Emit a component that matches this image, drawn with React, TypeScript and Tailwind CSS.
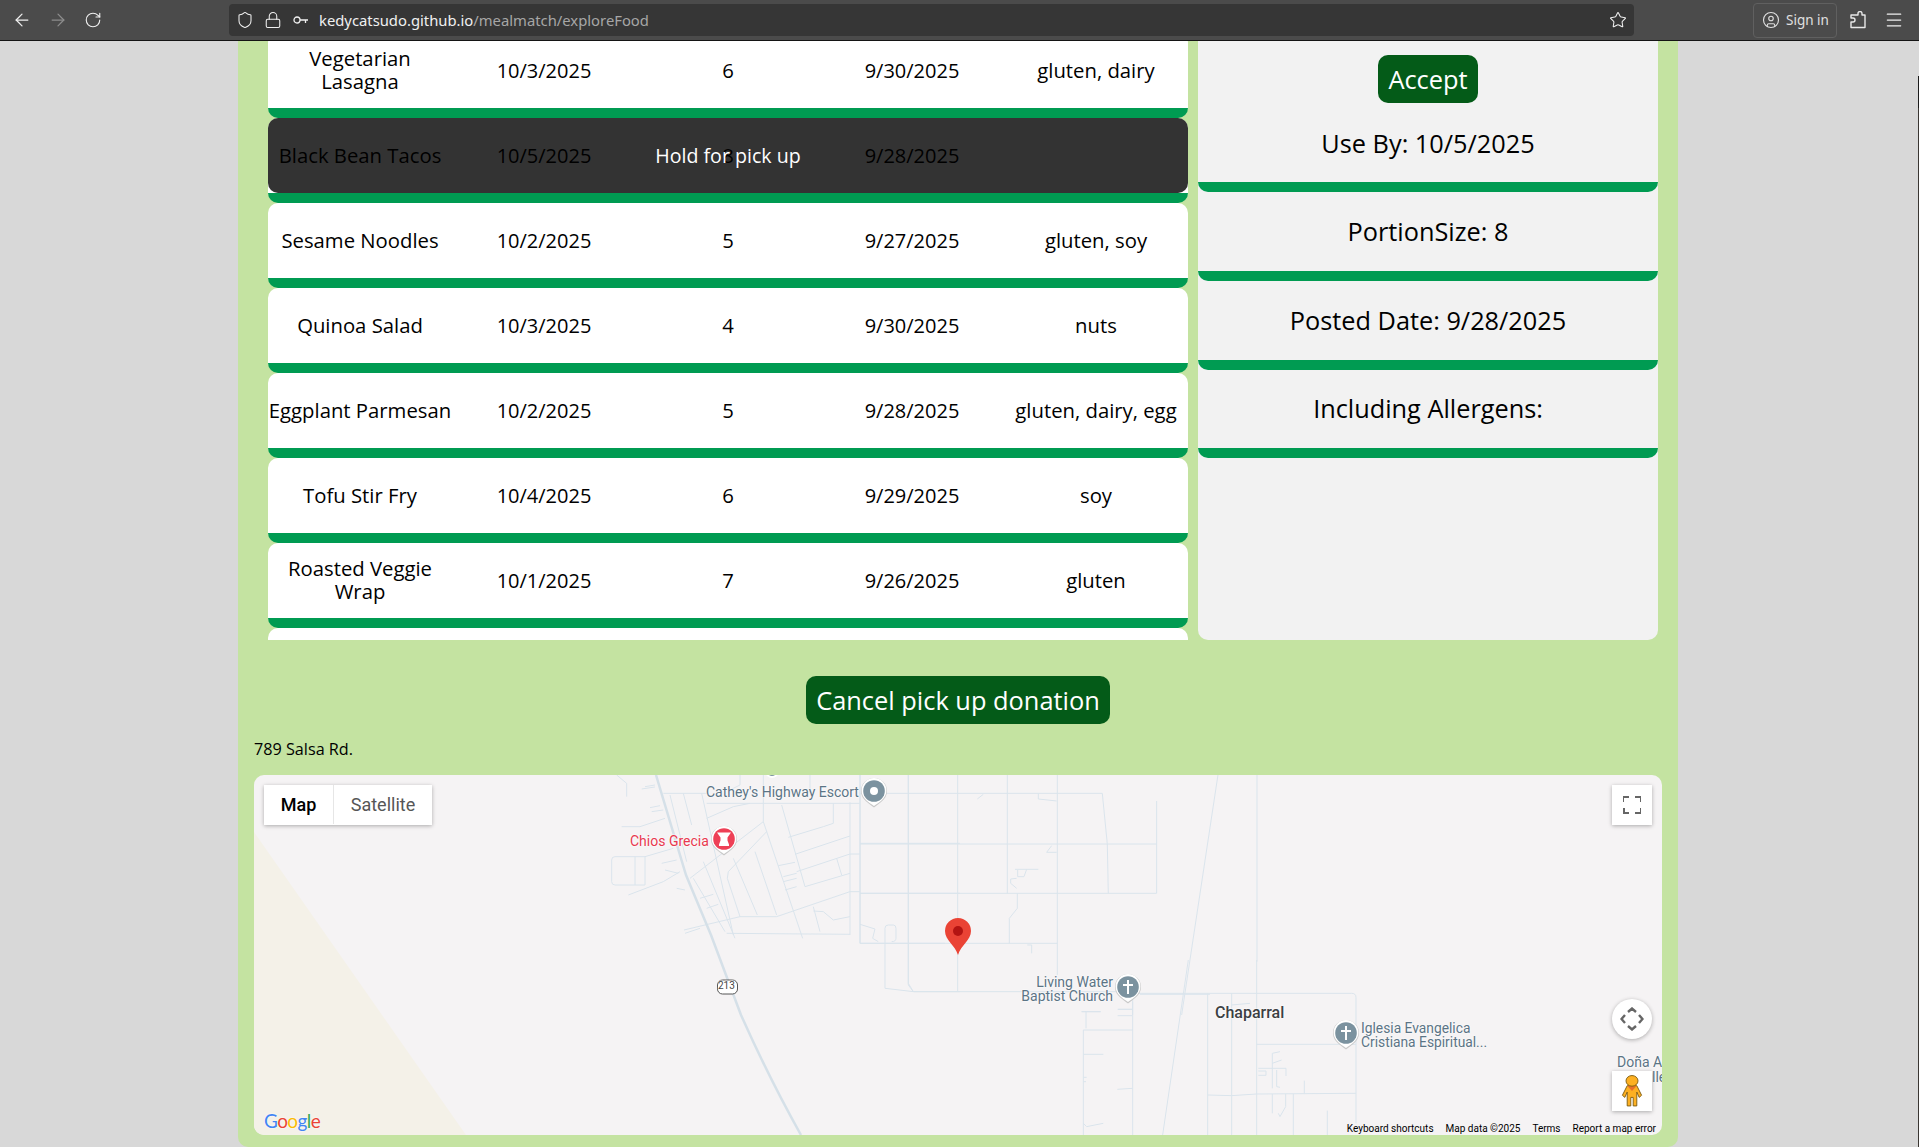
import React from 'react';
import { ArrowLeft, ArrowRight, RotateCw, Shield, Lock, Star, Menu, CircleUser } from 'lucide-react';

interface Food {
  name: string;
  useBy: string;
  portions: string;
  posted: string;
  allergens: string;
  held?: boolean;
}

const foods: Food[] = [
  { name: 'Vegetarian Lasagna', useBy: '10/3/2025', portions: '6', posted: '9/30/2025', allergens: 'gluten, dairy' },
  { name: 'Black Bean Tacos', useBy: '10/5/2025', portions: '8', posted: '9/28/2025', allergens: '', held: true },
  { name: 'Sesame Noodles', useBy: '10/2/2025', portions: '5', posted: '9/27/2025', allergens: 'gluten, soy' },
  { name: 'Quinoa Salad', useBy: '10/3/2025', portions: '4', posted: '9/30/2025', allergens: 'nuts' },
  { name: 'Eggplant Parmesan', useBy: '10/2/2025', portions: '5', posted: '9/28/2025', allergens: 'gluten, dairy, egg' },
  { name: 'Tofu Stir Fry', useBy: '10/4/2025', portions: '6', posted: '9/29/2025', allergens: 'soy' },
  { name: 'Roasted Veggie Wrap', useBy: '10/1/2025', portions: '7', posted: '9/26/2025', allergens: 'gluten' },
];

// roads traced from the map, in 3x crop coordinates
const westRoads = [
  'M190 55H320', 'M320 85H780', 'M750 82V480', 'M780 0V505', 'M780 205H1080', 'M780 355H1080', 'M780 505H1035',
  'M925 0V630L940 650', 'M210 60L260 260', 'M250 55L275 150', 'M305 55L400 480', 'M490 0V140L608 490',
  'M490 140L270 310', 'M500 170L385 290L382 310L420 425', 'M465 230L530 420', 'M400 250L472 420', 'M310 260L405 490',
  'M280 310L375 470', 'M252 465L420 425H530L750 350H780', 'M255 475L300 460', 'M380 475L750 478',
  'M545 90L615 335L750 295', 'M565 187L670 155L700 145V85', 'M585 238L750 183', 'M535 272L585 262',
  'M590 290L750 237H780', 'M710 250L725 300', 'M550 305L590 295', 'M550 320L590 310', 'M555 345L590 335',
  'M640 395L660 470', 'M640 408L670 410L700 435L750 425', 'M45 245H135V330H45Q35 330 35 320V255Q35 245 45 245',
  'M105 245V330', 'M135 245L220 220', 'M85 360L190 320L240 290', 'M65 155H120L195 130', 'M135 35L165 30', 'M125 42L165 36',
  'M150 98L180 92', 'M155 110L190 105', 'M185 265L230 255', 'M195 285L235 295', 'M50 0L80 25V65', 'M230 340L255 345',
  'M320 130L400 95L450 85', 'M420 0V30L390 45', 'M630 0V55', 'M300 370L340 358', 'M320 400L355 388',
  'M855 640V460Q855 450 865 450H880Q888 450 888 460V490Q888 500 875 500', 'M855 640L940 650H1080',
  'M780 448L825 462L818 490L835 500',
];

const midRoads = [
  'M30 55H757L772 207L775 355', 'M30 207H920', 'M920 78V355', 'M30 355H920', 'M30 505H622', 'M30 0V505',
  'M175 0V625L190 650', 'M323 0V650', 'M472 0V355', 'M622 0V600', 'M502 355V400L478 430V505', 'M190 650H800',
  'M565 55V72L620 78', 'M382 72L400 58', 'M495 283H565', 'M530 283L522 305H503V285', 'M500 340L482 325V312L500 310',
  'M590 232H620', 'M590 232L605 212', 'M532 510H545V535', 'M870 658H1080', 'M695 710H752', 'M805 703H848', 'M848 680V720',
  'M1104 0L995 720', 'M1221 0V560',
];

const eastRoads = [
  'M278 100H935Q948 100 948 112V490', 'M278 100V525', 'M130 210H278', 'M130 210V525', 'M125 155H182', 'M138 155V205',
  'M233 148H276', 'M233 167H276', 'M130 283H190', 'M232 388L278 385', 'M130 490L140 500L165 495L190 490',
  'M445 0L368 525', 'M650 0V525', 'M503 100V525', 'M575 100V525', 'M503 405L575 407L650 402L948 400', 'M650 253H948',
  'M760 402V525', 'M862 452V525', 'M793 362V400', 'M655 325H738V348', 'M655 333H678V346H655', 'M697 280V385',
  'M697 280L720 275', 'M697 310L725 300', 'M710 330V380L720 382', 'M697 402V460', 'M737 402V440L720 470L715 460',
  'M575 135L630 130', 'M130 352H140', 'M130 365H138',
];

const RoadLayer: React.FC<{ x: number; y: number; paths: string[] }> = ({ x, y, paths }) => (
  <g transform={`translate(${x} ${y}) scale(0.3333)`} fill="none" stroke="#dae4ec" strokeWidth="3">
    {paths.map((d) => (
      <path key={d} d={d} />
    ))}
  </g>
);

const PoiPin: React.FC<{ cx: number; cy: number; color: string; children: React.ReactNode }> = ({ cx, cy, color, children }) => (
  <g transform={`translate(${cx} ${cy})`}>
    <path d="M0 16.5C-4 13 -13 9 -13 0A13 13 0 1 1 13 0C13 9 4 13 0 16.5Z" fill="#c9c9c9" />
    <path d="M0 15C-4 12 -12.4 8 -12.4 -0.5A12.4 12.4 0 1 1 12.4 -0.5C12.4 8 4 12 0 15Z" fill="#fff" />
    <circle r="10.8" fill={color} />
    {children}
  </g>
);

const MapDrawing = () => (
  <svg className="absolute inset-0" width="1408" height="360" viewBox="254 775 1408 360">
    <polygon points="254,832 466,1135 254,1135" fill="#f4f1e8" />
    <RoadLayer x={600} y={775} paths={westRoads} />
    <RoadLayer x={850} y={775} paths={midRoads} />
    <RoadLayer x={1040} y={960} paths={eastRoads} />
    <path d="M656 775L686 875L711 935L741 1015Q770 1080 801 1135" fill="none" stroke="#d5e0e8" strokeWidth="2.5" />
    <rect x="717.5" y="980" width="20" height="14" rx="5" fill="#fff" stroke="#555" strokeWidth="1" />
    <circle cx="772" cy="771" r="6" fill="#7b929f" stroke="#fff" strokeWidth="2" />
    <PoiPin cx={874} cy={791} color="#7b929f">
      <circle r="4" fill="#fff" />
    </PoiPin>
    <PoiPin cx={724} cy={839} color="#ee4056">
      <path d="M-7 -6.5H7L3.5 -1.5V1.5L5 5.5V7H-5V5.5L-3.5 1.5V-1.5Z" fill="#fff" />
    </PoiPin>
    <PoiPin cx={1128} cy={987} color="#7b929f">
      <path d="M-1 -7H1V-3H5V-1H1V7H-1V-1H-5V-3H-1Z" fill="#fff" />
    </PoiPin>
    <PoiPin cx={1346} cy={1033} color="#7b929f">
      <path d="M-1 -7H1V-3H5V-1H1V7H-1V-1H-5V-3H-1Z" fill="#fff" />
    </PoiPin>
    <path d="M958 955C955 945 945 940 945 931A13 13 0 1 1 971 931C971 940 961 945 958 955Z" fill="#ea4335" />
    <circle cx="958" cy="931" r="5" fill="#b31412" />
  </svg>
);

const MapLabel: React.FC<{ className: string; children: React.ReactNode }> = ({ className, children }) => (
  <div className={`absolute font-['Roboto',sans-serif] [text-shadow:0_0_2px_#fff,0_0_2px_#fff] ${className}`}>{children}</div>
);

const Pegman = () => (
  <svg width="24" height="32" viewBox="0 0 20 30" preserveAspectRatio="none">
    <path d="M6 10H14L18 19L16 21L14 16V29H11V21H9V29H6V16L4 21L2 19Z" fill="#fdb022" stroke="#7a5a10" strokeWidth="0.8" />
    <path d="M6 10H14L10 15Z" fill="#e8702a" />
    <circle cx="10" cy="5.5" r="5" fill="#fdb022" stroke="#7a5a10" strokeWidth="0.8" />
  </svg>
);

const MapPanel = () => (
  <div className="relative mx-4 mt-[14px] h-[360px] overflow-hidden rounded-[10px] bg-[#f5f3f4]">
    <MapDrawing />

    <MapLabel className="left-[452px] top-[9px] text-[14px] leading-4 text-[#5b7485]">Cathey's Highway Escort</MapLabel>
    <MapLabel className="left-[376px] top-[58px] text-[14px] leading-4 text-[#e8384f]">Chios Grecia</MapLabel>
    <MapLabel className="left-[763px] top-[200px] w-[96px] whitespace-nowrap text-right text-[14px] leading-[14px] text-[#5b7485]">
      Living Water
      <br />
      Baptist Church
    </MapLabel>
    <MapLabel className="left-[961px] top-[230px] text-[16px] font-medium leading-4 text-[#3c4043]">Chaparral</MapLabel>
    <MapLabel className="left-[1107px] top-[246px] whitespace-nowrap text-[13.8px] leading-[14px] text-[#5b7485]">
      Iglesia Evangelica
      <br />
      Cristiana Espiritual...
    </MapLabel>
    <MapLabel className="left-[1363px] top-[280px] w-[45px] overflow-hidden whitespace-nowrap text-[14px] leading-[15px] text-[#5b7485]">
      Doña A
      <br />
      <span className="ml-[35px]">lle</span>
    </MapLabel>
    <MapLabel className="left-[464px] top-[205px] text-[10px] leading-3 text-[#444]">213</MapLabel>

    <div className="absolute left-[10px] top-[10px] flex h-10 bg-white pb-px text-[18px] shadow-[0_1px_4px_rgba(0,0,0,0.3)] font-['Roboto',sans-serif]">
      <div className="flex w-[70px] items-center justify-center border-r border-[#e6e6e6] font-medium text-black">Map</div>
      <div className="flex w-[98px] items-center justify-center text-[#565656]">Satellite</div>
    </div>

    <div className="absolute right-[10px] top-[10px] flex h-10 w-10 items-center justify-center bg-white shadow-[0_1px_4px_rgba(0,0,0,0.3)]">
      <svg width="18" height="18" viewBox="0 0 18 18" fill="none" stroke="#666" strokeWidth="2">
        <path d="M0 6V1H6M12 1H18V6M18 12V17H12M6 17H1V12" />
      </svg>
    </div>

    <div className="absolute right-[10px] top-[224px] flex h-10 w-10 items-center justify-center rounded-full bg-white shadow-[0_1px_4px_rgba(0,0,0,0.3)]">
      <svg width="24" height="24" viewBox="0 0 24 24" fill="none" stroke="#666" strokeWidth="2.4">
        <path d="M8 5L12 1.5L16 5M8 19L12 22.5L16 19M5 8L1.5 12L5 16M19 8L22.5 12L19 16" />
      </svg>
    </div>

    <div className="absolute right-[10px] top-[296px] flex h-10 w-10 items-center justify-center bg-white shadow-[0_1px_4px_rgba(0,0,0,0.3)]">
      <Pegman />
    </div>

    <div className="absolute bottom-[4px] left-[10px] text-[19px] leading-5 tracking-[-0.6px] font-['Lato',sans-serif] [text-shadow:0_0_2px_#fff]">
      <span className="text-[#4285f4]">G</span>
      <span className="text-[#ea4335]">o</span>
      <span className="text-[#fbbc05]">o</span>
      <span className="text-[#4285f4]">g</span>
      <span className="text-[#34a853]">l</span>
      <span className="text-[#ea4335]">e</span>
    </div>

    <div className="absolute bottom-0 right-[6px] flex h-[14px] items-center text-[10px] text-black font-['Roboto',sans-serif]">
      <span className="mr-3">Keyboard shortcuts</span>
      <span className="mr-3">Map data ©2025</span>
      <span className="mr-3">Terms</span>
      <span>Report a map error</span>
    </div>
  </div>
);

const FoodRow: React.FC<{ food: Food }> = ({ food }) => (
  <div className="relative grid h-[85px] shrink-0 grid-cols-5 items-center rounded-[10px] border-b-[10px] border-[#009b52] bg-white text-center text-[20.3px] leading-[23px] text-black">
    <div className={food.name.length > 17 ? 'pb-[2px]' : ''}>{food.name}</div>
    <div className="text-[20px]">{food.useBy}</div>
    <div>{food.portions}</div>
    <div className="text-[20px]">{food.posted}</div>
    <div>{food.allergens}</div>
    {food.held && (
      <div className="absolute inset-0 flex items-center justify-center rounded-[10px] bg-black/80 text-[19.6px] text-white">Hold for pick up</div>
    )}
  </div>
);

const DetailItem: React.FC<{ label: string }> = ({ label }) => (
  <div className="flex h-[89px] items-center justify-center rounded-[10px] border-b-[10px] border-[#009b52] text-[25.3px] last:h-[88px] [&:nth-child(2)]:pt-[2px]">{label}</div>
);

const ExtensionIcon = () => (
  <svg width="16" height="18" viewBox="0 0 16 18" fill="none" stroke="#e8e8e8" strokeWidth="1.4">
    <path d="M6 4H8V2.5A2 2 0 0 1 12 2.5V4H15V16.5H1V11H3A2 2 0 0 0 3 7H1V4Z" strokeLinejoin="round" />
  </svg>
);

const Toolbar = () => (
  <div className="flex h-[41px] shrink-0 items-center border-b border-[#141414] bg-[#4b4b4b] text-[#f0f0f0] font-['Noto_Sans',sans-serif]">
    <div className="ml-3 flex w-[217px] items-center gap-4">
      <ArrowLeft size={20} strokeWidth={1.5} />
      <ArrowRight size={20} strokeWidth={1.5} className="opacity-40" />
      <RotateCw size={18} strokeWidth={1.5} />
    </div>
    <div className="flex h-8 w-[1405px] items-center rounded-[4px] bg-[#363636]">
      <Shield size={18} strokeWidth={1.4} className="ml-[7px]" />
      <Lock size={18} strokeWidth={1.4} className="ml-[10px]" />
      <svg className="ml-[11px]" width="16" height="10" viewBox="0 0 16 10" fill="none" stroke="#f0f0f0" strokeWidth="1.3">
        <circle cx="4" cy="5" r="3" />
        <path d="M7 5H15M12.5 5V8" />
      </svg>
      <span className="ml-[10px] text-[14.8px]">kedycatsudo.github.io</span>
      <span className="text-[14.8px] text-[#a6a6a6]">/mealmatch/exploreFood</span>
      <Star size={18} strokeWidth={1.4} className="ml-auto mr-[7px]" />
    </div>
    <div className="ml-[119px] flex h-[35px] w-[84px] items-center rounded-[4px] border border-[#606060] pl-[8px] text-[13.5px] text-[#e0e0e0]">
      <CircleUser size={18} strokeWidth={1.5} />
      <span className="ml-[6px]">Sign in</span>
    </div>
    <div className="ml-[13px]">
      <ExtensionIcon />
    </div>
    <Menu size={20} strokeWidth={1.5} className="ml-[18px]" />
  </div>
);

const App = () => (
  <div className="relative flex h-screen w-full flex-col overflow-hidden bg-[#d8d8d8] text-black font-['Open_Sans',sans-serif]">
    <Toolbar />
    <div className="absolute right-0 top-[76px] h-8 w-px bg-[#1c1c1c]" />
    <div className="absolute bottom-0 right-0 top-[108px] w-px bg-[#3a3632]" />

    <main className="ml-[238px] w-[1440px] flex-1 rounded-b-[10px] bg-[#c4e3a1]">
      <div className="ml-[30px] flex h-[599px] w-[1390px] gap-[10px]">
        <div className="w-[920px] overflow-hidden">
          <div className="-mt-2">
            {foods.map((food) => (
              <FoodRow key={food.name} food={food} />
            ))}
            <div className="h-[85px] rounded-[10px] bg-white" />
          </div>
        </div>
        <div className="w-[460px] rounded-b-[10px] bg-[#f2f2f2]">
          <div className="flex justify-center pt-[14px]">
            <button className="h-12 w-[100px] rounded-[10px] bg-[#045b18] pt-px text-[25.4px] text-white">Accept</button>
          </div>
          <DetailItem label="Use By: 10/5/2025" />
          <DetailItem label="PortionSize: 8" />
          <DetailItem label="Posted Date: 9/28/2025" />
          <DetailItem label="Including Allergens:" />
        </div>
      </div>

      <div className="mt-9 flex justify-center">
        <button className="h-[48px] w-[304px] rounded-[10px] bg-[#045b18] text-[25.4px] text-white">Cancel pick up donation</button>
      </div>
      <div className="ml-4 mt-[13px] text-[16.2px] leading-6">789 Salsa Rd.</div>
      <MapPanel />
    </main>
  </div>
);

export default App;
